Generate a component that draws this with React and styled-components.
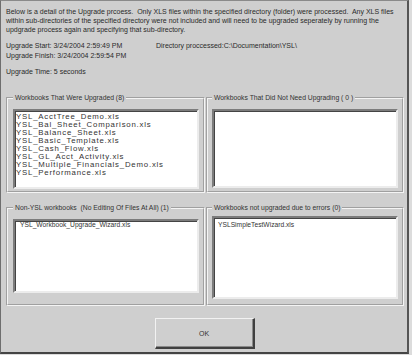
import React from "react";
import styled, { createGlobalStyle } from "styled-components";

const GlobalStyle = createGlobalStyle`
  html, body {
    margin: 0;
    padding: 0;
    background: #dcdcdc;
  }
  body {
    font-family: "Liberation Sans", Arial, sans-serif;
  }
`;

const Dialog = styled.div`
  box-sizing: border-box;
  width: 409px;
  height: 354px;
  background: #cfcfcf;
  border-top: 1px solid #8a8a8a;
  border-left: 1px solid #6e6e6e;
  border-right: 2px solid #555;
  border-bottom: 2px solid #444;
  display: flex;
  flex-direction: column;
  padding: 6px 0 0 5px;
  color: #2a2a2a;
`;

const Intro = styled.p`
  margin: 0;
  font-size: 7px;
  line-height: 9px;
  white-space: nowrap;
`;

const InfoBlock = styled.div`
  margin-top: 7px;
  font-size: 7px;
  line-height: 10px;
  white-space: nowrap;
`;

const InfoRow = styled.div`
  display: flex;
  margin-top: ${(p) => p.$gap || 0}px;
`;

const InfoCell = styled.span`
  width: ${(p) => p.$width || "auto"};
`;

const Groups = styled.div`
  display: grid;
  grid-template-columns: 199px 198px;
  column-gap: 1px;
  margin-top: 17px;
`;

const Group = styled.fieldset`
  margin: 0 0 ${(p) => p.$mb || 0}px 0;
  padding: 2px 4px 4px ${(p) => p.$pl}px;
  border: 2px groove #f4f4f4;
  height: ${(p) => p.$height}px;
  box-sizing: border-box;
  min-width: 0;
`;

const Legend = styled.legend`
  font-size: 6.8px;
  color: #333;
  padding: 0 2px;
  margin-left: 0;
  line-height: 8px;
`;

const ListBox = styled.div`
  box-sizing: border-box;
  height: ${(p) => p.$height}px;
  margin-top: ${(p) => p.$top || 0}px;
  background: #fff;
  border-top: 2px solid #7c7c7c;
  border-left: 2px solid #7c7c7c;
  border-right: 2px solid #ececec;
  border-bottom: 2px solid #ececec;
  box-shadow: inset 1px 1px 0 #444;
  padding: ${(p) => p.$pt}px 0 0 ${(p) => p.$indent || 1}px;
  font-size: ${(p) => p.$size}px;
  letter-spacing: ${(p) => p.$spacing || 0}px;
  line-height: ${(p) => p.$lh || 8}px;
  color: #333;
  white-space: nowrap;
  overflow: hidden;
`;

const ButtonRow = styled.div`
  display: flex;
  justify-content: center;
  padding-right: 4px;
  margin-top: 12px;
`;

const OkButton = styled.button`
  box-sizing: border-box;
  width: 100px;
  height: 31px;
  background: #cfcfcf;
  border-top: 1px solid #f2f2f2;
  border-left: 1px solid #f2f2f2;
  border-right: 2px solid #404040;
  border-bottom: 2px solid #404040;
  box-shadow: inset -1px -1px 0 #8a8a8a;
  font-family: "Liberation Sans", Arial, sans-serif;
  font-size: 7px;
  color: #333;
  padding: 0;
`;

const upgraded = [
  "YSL_AcctTree_Demo.xls",
  "YSL_Bal_Sheet_Comparison.xls",
  "YSL_Balance_Sheet.xls",
  "YSL_Basic_Template.xls",
  "YSL_Cash_Flow.xls",
  "YSL_GL_Acct_Activity.xls",
  "YSL_Multiple_Financials_Demo.xls",
  "YSL_Performance.xls",
];

function FileList({ items, height, top, pt, indent, size, spacing, lh }) {
  return (
    <ListBox
      $height={height}
      $top={top}
      $pt={pt}
      $indent={indent}
      $size={size}
      $spacing={spacing}
      $lh={lh}
    >
      {items.map((name) => (
        <div key={name}>{name}</div>
      ))}
    </ListBox>
  );
}

export default function App() {
  return (
    <>
      <GlobalStyle />
      <Dialog>
        <Intro>
          Below is a detail of the Upgrade prcoess.&nbsp; Only XLS files within the specified directory (folder) were processed.&nbsp; Any XLS files
          <br />
          within sub-directories of the specified directory were not included and will need to be upgraded seperately by running the
          <br />
          updgrade process again and specifying that sub-directory.
        </Intro>
        <InfoBlock>
          <InfoRow>
            <InfoCell $width="150px">Upgrade Start: 3/24/2004 2:59:49 PM</InfoCell>
            <InfoCell>Directory proccessed:C:\Documentation\YSL\</InfoCell>
          </InfoRow>
          <InfoRow>Upgrade Finish: 3/24/2004 2:59:54 PM</InfoRow>
          <InfoRow $gap={6}>Upgrade Time: 5 seconds</InfoRow>
        </InfoBlock>
        <Groups>
          <Group $height={99} $mb={11} $pl={5}>
            <Legend>Workbooks That Were Upgraded (8)</Legend>
            <FileList
              items={upgraded}
              height={80}
              top={5}
              pt={2}
              size={7.8}
              spacing={0.8}
              lh={8}
            />
          </Group>
          <Group $height={99} $mb={11} $pl={4}>
            <Legend>Workbooks That Did Not Need Upgrading ( 0 )</Legend>
            <FileList items={[]} height={79} top={5} pt={2} size={7.8} />
          </Group>
          <Group $height={102} $pl={5}>
            <Legend>Non-YSL workbooks&nbsp; (No Editing Of Files At All) (1)</Legend>
            <FileList
              items={["YSL_Workbook_Upgrade_Wizard.xls"]}
              height={74}
              top={5}
              pt={0}
              indent={5}
              size={6.7}
            />
          </Group>
          <Group $height={102} $pl={4}>
            <Legend>Workbooks not upgraded due to errors (0)</Legend>
            <FileList
              items={["YSLSimpleTestWizard.xls"]}
              height={83}
              top={2}
              pt={3}
              indent={4}
              size={6.7}
            />
          </Group>
        </Groups>
        <ButtonRow>
          <OkButton>OK</OkButton>
        </ButtonRow>
      </Dialog>
    </>
  );
}
